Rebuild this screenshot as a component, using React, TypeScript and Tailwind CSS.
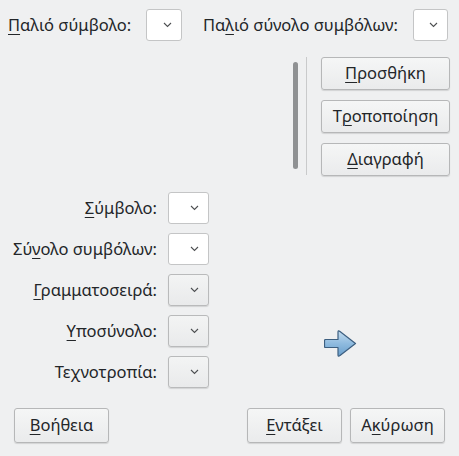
import React from "react";

const font = { fontFamily: '"Noto Sans", "DejaVu Sans", sans-serif' };

function U({ children }: { children: React.ReactNode }) {
  return <span className="underline underline-offset-[3px] decoration-1">{children}</span>;
}

function Chevron() {
  return (
    <svg width="9" height="6" viewBox="0 0 9 6" className="shrink-0">
      <path d="M1 1 L4.5 4.5 L8 1" fill="none" stroke="#4d4f51" strokeWidth="1.1" />
    </svg>
  );
}

function Combo({ editable, w }: { editable?: boolean; w: string }) {
  return (
    <div
      className={`${w} h-[32px] shrink-0 rounded-[3px] border flex items-center justify-end pr-[9px] ${
        editable
          ? "bg-white border-[#c4c5c6]"
          : "bg-gradient-to-b from-[#f3f4f4] to-[#e9eaeb] border-[#b9babb] shadow-[0_1px_1px_rgba(0,0,0,0.12)]"
      }`}
    >
      <Chevron />
    </div>
  );
}

function Btn({ children, w, h = "h-[33px]" }: { children: React.ReactNode; w: string; h?: string }) {
  return (
    <div
      className={`${w} ${h} shrink-0 rounded-[3px] border border-[#b6b7b8] bg-gradient-to-b from-[#f5f6f6] to-[#eaebec] shadow-[0_1px_1px_rgba(0,0,0,0.12)] flex items-center justify-center text-[16.5px] text-[#232629]`}
    >
      {children}
    </div>
  );
}

function Arrow() {
  return (
    <svg width="33" height="29" viewBox="0 0 33 29">
      <defs>
        <linearGradient id="ag" x1="0" y1="0" x2="0" y2="1">
          <stop offset="0" stopColor="#c4dcef" />
          <stop offset="0.5" stopColor="#8fbbdf" />
          <stop offset="1" stopColor="#6a9fcc" />
        </linearGradient>
      </defs>
      <path
        d="M1.5 10.5 L14 10.5 L14 3 Q14 1 16 2.5 L31.5 14.5 L16 26.5 Q14 28 14 26 L14 18.5 L1.5 18.5 Q0.5 18.5 0.5 17.5 L0.5 11.5 Q0.5 10.5 1.5 10.5 Z"
        fill="url(#ag)"
        stroke="#3d5f80"
        strokeWidth="1.2"
        strokeLinejoin="round"
      />
    </svg>
  );
}

const rows: { label: React.ReactNode; editable: boolean }[] = [
  { label: <><U>Σ</U>ύμβολο:</>, editable: true },
  { label: <>Σύ<U>ν</U>ολο συμβόλων:</>, editable: true },
  { label: <><U>Γ</U>ραμματοσειρά:</>, editable: false },
  { label: <><U>Υ</U>ποσύνολο:</>, editable: false },
  { label: <>Τε<U>χ</U>νοτροπία:</>, editable: false },
];

export default function App() {
  return (
    <div style={font} className="w-[459px] h-[456px] bg-[#eff0f1] text-[#232629] text-[16.5px] flex flex-col overflow-hidden">
      {/* top row */}
      <div className="flex items-center pt-[9px] pl-[8px] h-[41px]">
        <span className="w-[138px] whitespace-nowrap"><U>Π</U>αλιό σύμβολο:</span>
        <Combo editable w="w-[36px]" />
        <span className="ml-[21px] w-[210px] whitespace-nowrap">Πα<U>λ</U>ιό σύνολο συμβόλων:</span>
        <Combo editable w="w-[35px]" />
      </div>

      {/* list area + buttons */}
      <div className="flex mt-[16px] h-[119px]">
        <div className="w-[293px]" />
        <div className="w-[5px] mt-[5px] h-[107px] rounded-full bg-[#8f9193]" />
        <div className="w-[8px]" />
        <div className="w-px h-[118px] bg-[#c9cacb]" />
        <div className="w-[14px]" />
        <div className="flex flex-col gap-[10px]">
          <Btn w="w-[129px]"><U>Π</U>ροσθήκη</Btn>
          <Btn w="w-[129px]">Τ<U>ρ</U>οποποίηση</Btn>
          <Btn w="w-[129px]"><U>Δ</U>ιαγραφή</Btn>
        </div>
      </div>

      {/* form */}
      <div className="flex mt-[16px]">
        <div className="flex flex-col gap-[9px]">
          {rows.map((r, i) => (
            <div key={i} className="flex items-center h-[32px]">
              <span className="w-[157px] text-right whitespace-nowrap">{r.label}</span>
              <div className="w-[11px]" />
              <Combo editable={r.editable} w="w-[41px]" />
            </div>
          ))}
        </div>
        <div className="ml-[115px] mt-[137px]">
          <Arrow />
        </div>
      </div>

      {/* bottom buttons */}
      <div className="flex items-center mt-[20px] px-[14px]">
        <Btn w="w-[95px]" h="h-[35px]"><U>Β</U>οήθεια</Btn>
        <div className="flex-1" />
        <Btn w="w-[95px]" h="h-[35px]"><U>Ε</U>ντάξει</Btn>
        <div className="w-[8px]" />
        <Btn w="w-[95px]" h="h-[35px]">Α<U>κ</U>ύρωση</Btn>
      </div>
    </div>
  );
}
